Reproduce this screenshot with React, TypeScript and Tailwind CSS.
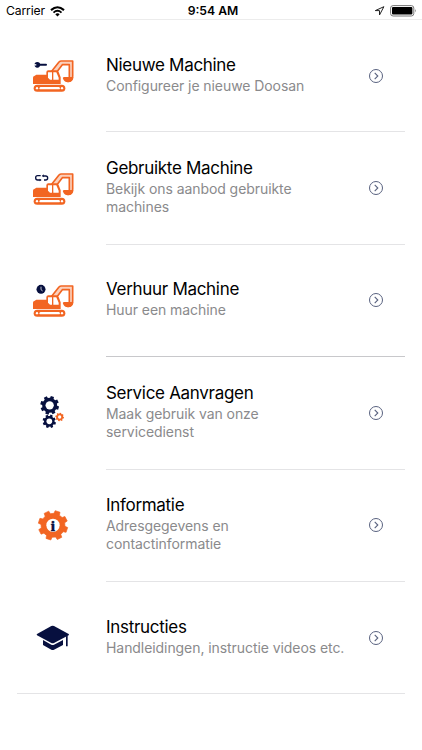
import React from 'react';

const ORANGE = '#f26522';
const NAVY = '#07103f';

// Outline of a gear with flat teeth, centred on cx / cy
const gearPath = (cx: number, cy: number, outer: number, inner: number, teeth: number, turn = 0) => {
  const step = (Math.PI * 2) / teeth;
  const points: string[] = [];
  for (let i = 0; i < teeth; i++) {
    const a = i * step + turn;
    [
      [-0.31, inner],
      [-0.22, outer],
      [0.22, outer],
      [0.31, inner],
    ].forEach(([offset, r]) => {
      const angle = a + offset * step;
      points.push(`${(cx + r * Math.cos(angle)).toFixed(2)} ${(cy + r * Math.sin(angle)).toFixed(2)}`);
    });
  }
  return `M${points.join('L')}Z`;
};

const Excavator = ({ children }: { children: React.ReactNode }) => (
  <svg width="60" height="50" viewBox="0 0 180 150" fill="none">
    {/* Arm and bucket */}
    <path d="M85 63L105 37Q107 34 111 34H146V82H136V44H115L100 65Z" fill={ORANGE} fillOpacity="0.3" />
    <path
      d="M83 64L105 36Q108 33 112 33H146V78Q146 94 132 94Q122 94 119 84H136V44H115L99 65"
      stroke={ORANGE}
      strokeWidth="5"
      strokeLinejoin="round"
    />
    <path d="M119 81H148Q147 97 132 97Q120 96 119 81Z" fill={ORANGE} />
    {/* Body */}
    <path d="M27 83Q27 79 31 78L37 74H67V67Q67 61 73 61H97Q102 61 104 66L110 82V102H27Z" fill={ORANGE} />
    <path d="M72 67H84V89H78L72 83Z" fill="#fff" />
    <path d="M88 67H97L104 83V89H88Z" fill="#fff" />
    {/* Tracks */}
    <rect x="29" y="104" width="95" height="21" rx="10.5" fill={ORANGE} />
    <path d="M50 114.5H104" stroke="#fff" strokeWidth="7" strokeLinecap="round" />
    <circle cx="39" cy="114.5" r="3.5" fill="#fff" />
    <circle cx="114" cy="114.5" r="3.5" fill="#fff" />
    {children}
  </svg>
);

const KeyExcavator = () => (
  <Excavator>
    <path d="M46 44.5H66" stroke={NAVY} strokeWidth="6" strokeLinecap="round" />
    <circle cx="40" cy="44.5" r="8.5" fill={NAVY} />
    <path d="M30 42.5H37V46.5H30Z" fill="#fff" />
  </Excavator>
);

const LoopExcavator = () => (
  <Excavator>
    <path d="M50 38H41Q35 38 35 44Q35 51 41 51H49" stroke={NAVY} strokeWidth="4" />
    <path d="M57 39H65Q71 39 71 45Q71 51 65 51H60" stroke={NAVY} strokeWidth="4" />
    <path d="M47 47L53 51L47 55ZM59 34L53 39L59 43Z" fill={NAVY} />
  </Excavator>
);

const ClockExcavator = () => (
  <Excavator>
    <circle cx="51" cy="43" r="13.5" fill={NAVY} />
    <path d="M51 35V44L56 48" stroke="#fff" strokeWidth="2.2" />
  </Excavator>
);

const Gears = () => (
  <svg width="60" height="50" viewBox="0 0 180 150">
    <path d={gearPath(77, 55, 28.5, 22.5, 8, 0.3)} fill={NAVY} />
    <circle cx="77" cy="55" r="12.5" fill="#fff" />
    <path d={gearPath(76, 103, 20.5, 16, 8, 0.35)} fill={NAVY} />
    <circle cx="76" cy="103" r="8.5" fill="#fff" />
    <circle cx="107" cy="90" r="14.5" fill="#fff" />
    <path d={gearPath(107, 90, 13, 10.5, 8, 0.2)} fill={ORANGE} />
    <circle cx="107" cy="90" r="5" fill="#fff" />
  </svg>
);

const InfoGear = () => (
  <svg width="60" height="50" viewBox="0 0 180 150">
    <path d={gearPath(87, 76, 44.5, 36, 8, 0.32)} fill={ORANGE} stroke={ORANGE} strokeWidth="2" strokeLinejoin="round" />
    <circle cx="87" cy="76" r="20" fill="#fff" />
    <text
      x="87"
      y="92"
      textAnchor="middle"
      fill={NAVY}
      stroke={NAVY}
      strokeWidth="1.5"
      className="font-['Liberation_Serif',serif] text-[46px] font-bold"
    >
      i
    </text>
  </svg>
);

const Graduation = () => (
  <svg width="60" height="50" viewBox="0 0 180 150" fill={NAVY}>
    <path d="M82 42Q86 40 90 42L134 66Q136 68 134 70L90 93Q86 95 82 93L39 70Q37 68 39 66Z" />
    <path d="M57 84L82 98Q86 100 90 98L117 84V99L90 113Q86 115 82 113L57 99Z" />
    <path d="M126 73L131 71V103H126Z" />
  </svg>
);

const Chevron = () => (
  <svg width="16" height="16" viewBox="0 0 16 16" fill="none" stroke="#59627f" className="shrink-0">
    <circle cx="8" cy="8" r="6.5" strokeWidth="1" />
    <path d="M6.7 4.9L9.8 8L6.7 11.1" strokeWidth="1.1" />
  </svg>
);

const StatusBar = () => (
  <div className="flex h-5 items-center text-black">
    <div className="flex w-[141px] items-center gap-[5px] pl-[6px] pt-[2px] text-[12.2px] leading-4">
      <span className="tracking-[-0.15px]">Carrier</span>
      <svg width="15" height="11" viewBox="0 0 15 11" fill="none" stroke="#000">
        <path d="M1 4.1Q7.5 -1.6 14 4.1" strokeWidth="2.1" />
        <path d="M3.5 6.6Q7.5 3.1 11.5 6.6" strokeWidth="1.9" />
        <path d="M5.3 8.3Q7.5 6.4 9.7 8.3L7.5 10.6Z" fill="#000" stroke="none" />
      </svg>
    </div>
    <div className="w-[144px] pt-[2px] text-center text-[12.2px] font-semibold leading-4">9:54 AM</div>
    <div className="flex w-[137px] items-center justify-end gap-[5px] pr-[5px] pt-px">
      <svg width="11" height="10" viewBox="0 0 11 10" fill="none" stroke="#222" strokeWidth="1">
        <path d="M9.9 0.7L1.3 4.6H5.5V9Z" strokeLinejoin="round" />
      </svg>
      <svg width="27" height="12" viewBox="0 0 27 12">
        <rect x="0.6" y="0.6" width="23.2" height="10.4" rx="2.5" fill="none" stroke="#777" />
        <rect x="2" y="2" width="20.4" height="7.6" rx="1" />
        <path d="M25 4Q26.6 5.8 25 7.6Z" fill="#777" />
      </svg>
    </div>
  </div>
);

const items = [
  { title: 'Nieuwe Machine', text: 'Configureer je nieuwe Doosan', icon: <KeyExcavator /> },
  { title: 'Gebruikte Machine', text: 'Bekijk ons aanbod gebruikte machines', icon: <LoopExcavator /> },
  { title: 'Verhuur Machine', text: 'Huur een machine', icon: <ClockExcavator />, line: 'border-[#c8c8cb]' },
  { title: 'Service Aanvragen', text: 'Maak gebruik van onze servicedienst', icon: <Gears /> },
  { title: 'Informatie', text: 'Adresgegevens en contactinformatie', icon: <InfoGear /> },
  { title: 'Instructies', text: 'Handleidingen, instructie videos etc.', icon: <Graduation /> },
];

const App = () => {
  return (
    <div className="h-[750px] w-[422px] overflow-hidden bg-white font-['Inter',sans-serif]">
      <StatusBar />
      <div className="ml-[17px] -mt-px h-px bg-[#ececec]" />
      <ul>
        {items.map((item, index) => (
          <li key={item.title} className="flex h-[112.4px]">
            <div className="flex w-[89px] shrink-0 items-center pb-[2px] pl-6">{item.icon}</div>
            <div
              className={`mr-[17px] flex flex-1 items-center border-b pr-[21px] ${item.line || 'border-[#e4e4e6]'} ${
                index === items.length - 1 ? '-ml-[72px] pl-[89px]' : 'ml-[17px]'
              }`}
            >
              <div className="flex-1 pb-[2.6px]">
                <h2 className="text-[17px] leading-[23px] tracking-[-0.3px] text-black">{item.title}</h2>
                <p className="max-w-[241px] text-[14px] leading-[18.5px] tracking-[-0.07px] text-[#8a8a8c]">
                  {item.text}
                </p>
              </div>
              <Chevron />
            </div>
          </li>
        ))}
      </ul>
    </div>
  );
};

export default App;
